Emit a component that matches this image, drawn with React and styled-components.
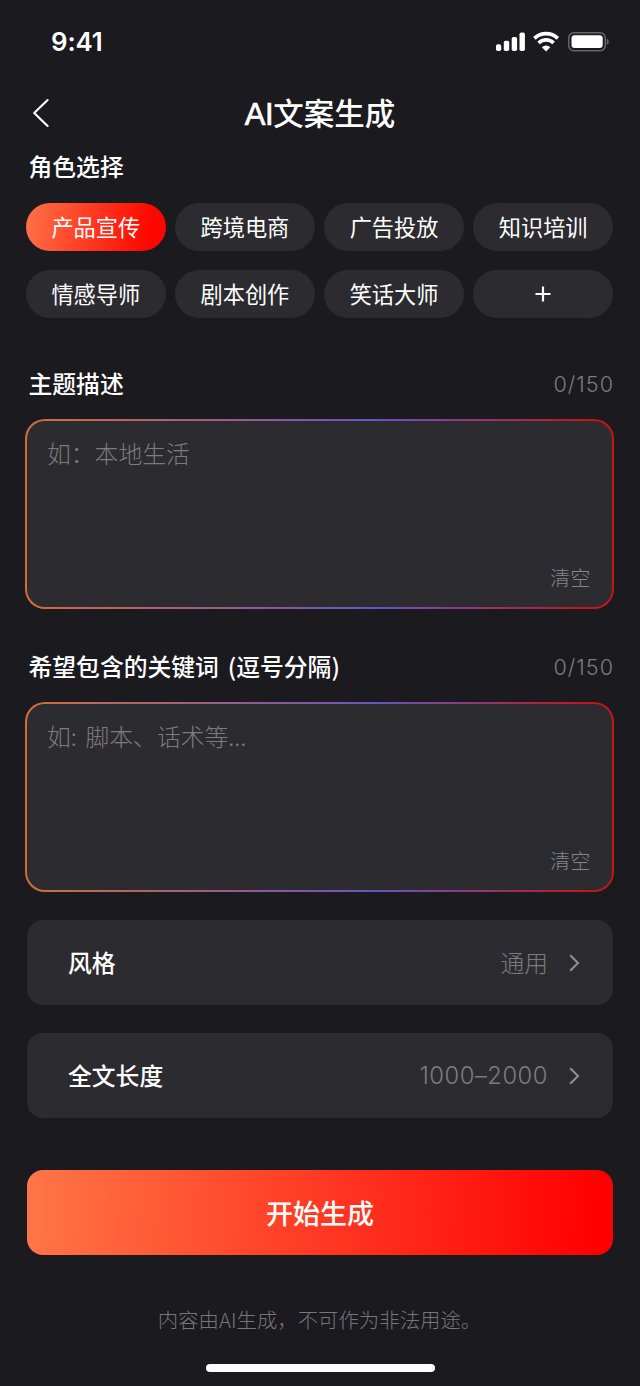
import React, { useState } from "react"
import styled, { createGlobalStyle, css } from "styled-components"

const GlobalStyle = createGlobalStyle`
  * {
    box-sizing: border-box;
  }

  body {
    margin: 0;
    background: #1b1a1f;
  }

  button {
    border: 0;
    padding: 0;
    margin: 0;
    background: none;
    color: inherit;
    font: inherit;
  }
`

const Screen = styled.main`
  width: 640px;
  height: 1386px;
  overflow: hidden;
  display: flex;
  flex-direction: column;
  background: #1b1a1f;
  color: #fff;
  font-family: "Noto Sans CJK SC", sans-serif;
`

const StatusBar = styled.div`
  height: 84px;
  padding: 0 31px 0 51px;
  display: flex;
  align-items: center;
  justify-content: space-between;
`

const Time = styled.span`
  font-family: Inter, sans-serif;
  font-size: 25.8px;
  font-weight: 600;
  line-height: 30px;
  letter-spacing: -0.1px;
`

const StatusIcons = styled.div`
  display: flex;
  align-items: center;

  svg {
    display: block;
  }
`

const Header = styled.header`
  height: 58px;
  padding: 0 32px;
  display: grid;
  grid-template-columns: 18px 1fr 18px;
  align-items: center;

  svg {
    display: block;
  }
`

const Title = styled.h1`
  margin: 0;
  text-align: center;
  font-size: 30.5px;
  font-weight: 500;
  line-height: 44px;

  span {
    font-family: "Liberation Sans", sans-serif;
    font-size: 31px;
    -webkit-text-stroke: 0.7px #fff;
    letter-spacing: -0.3px;
  }
`

const Label = styled.h2`
  margin: 0;
  padding-bottom: 2px;
  font-size: 23.8px;
  font-weight: 500;
  line-height: 34px;
  word-spacing: 3.5px;
  white-space: pre;
`

const Roles = styled.section`
  padding: 7px 27px 0 26px;

  ${Label} {
    padding-left: 2.5px;
  }
`

const RoleGrid = styled.div`
  margin-top: 18px;
  display: grid;
  grid-template-columns: repeat(4, 1fr);
  grid-auto-rows: 48px;
  gap: 19px 9.5px;
`

const Role = styled.button`
  padding-bottom: 2px;
  display: flex;
  align-items: center;
  justify-content: center;
  border-radius: 24px;
  background: #2c2b30;
  font-size: 22.2px;
  line-height: 32px;

  svg {
    margin-top: 2px;
  }

  ${({ $active }) =>
    $active &&
    css`
      background: linear-gradient(100deg, #ff7348 0%, #ff0500 88%);
    `}
`

const Field = styled.section`
  padding: 0 26px 0 25px;
  margin-top: ${({ $top }) => $top}px;
`

const FieldHead = styled.div`
  height: 36px;
  padding: 0 0 0 3.5px;
  display: flex;
  align-items: center;
  justify-content: space-between;
`

const Counter = styled.span`
  padding-bottom: 1px;
  font-family: Inter, sans-serif;
  font-size: 21.6px;
  font-weight: 300;
  letter-spacing: 1px;
  color: #7c7b7f;
`

const InputBox = styled.div`
  height: 190px;
  margin-top: 17px;
  padding: 14px 21.5px 14px 20px;
  display: flex;
  flex-direction: column;
  justify-content: space-between;
  border: 2px solid transparent;
  border-radius: 20px;
  background: linear-gradient(#2c2b30, #2c2b30) padding-box,
    linear-gradient(90deg, #d66c3c 0%, #6a52c4 60%, #c2161b 96%) border-box;
`

const Placeholder = styled.p`
  margin: 0;
  font-size: 23.8px;
  font-weight: 300;
  line-height: 36px;
  word-spacing: 3.5px;
  color: #7c7b7f;
`

const Clear = styled.button`
  align-self: flex-end;
  font-size: 20.2px;
  font-weight: 300;
  line-height: 30px;
  color: #858488;
`

const Options = styled.section`
  margin: 28px 27px 0;
  display: grid;
  grid-auto-rows: 85px;
  gap: 28px;
`

const Option = styled.div`
  padding: 0 33px 0 41px;
  display: flex;
  align-items: center;
  border-radius: 16px;
  background: #2c2b30;

  svg {
    display: block;
    margin-left: 21px;
  }
`

const OptionValue = styled.span`
  margin-left: auto;
  padding-bottom: ${({ $latin }) => ($latin ? 0 : 2)}px;
  font-family: ${({ $latin }) => ($latin ? "Inter, sans-serif" : "inherit")};
  font-size: 23.8px;
  font-weight: 300;
  line-height: 34px;
  letter-spacing: ${({ $latin }) => ($latin ? 0.5 : 0)}px;
  color: #7c7b7f;
`

const Submit = styled.button`
  flex: none;
  height: 85px;
  margin: 52px 27px 0;
  border-radius: 16px;
  background: linear-gradient(93deg, #ff7648 0%, #ff0000 97%);
  font-size: 27px;
  font-weight: 500;
  line-height: 40px;
`

const Notice = styled.p`
  margin: 49px 0 0;
  padding-right: 1px;
  text-align: center;
  font-size: 20.4px;
  font-weight: 300;
  line-height: 30px;
  color: #77767a;
`

const HomeIndicator = styled.div`
  width: 229px;
  height: 8px;
  margin: 29.5px auto 0;
  border-radius: 4px;
  background: #fff;
`

const roles = [
  "产品宣传",
  "跨境电商",
  "广告投放",
  "知识培训",
  "情感导师",
  "剧本创作",
  "笑话大师",
]

function PhoneStatus() {
  return (
    <StatusIcons>
      <svg width='114' height='22' viewBox='0 0 114 22' fill='#fff'>
        <rect x='1' y='13.2' width='5.2' height='6.8' rx='1.8' />
        <rect x='8.8' y='9.8' width='5.4' height='10.2' rx='1.8' />
        <rect x='16.7' y='5.9' width='5.4' height='14.1' rx='1.8' />
        <rect x='24.5' y='1.5' width='5.4' height='18.5' rx='1.8' />
        <g fill='none' stroke='#fff' strokeWidth='3.8'>
          <path d='M39.4 7.3a17 17 0 0 1 23.4 0' />
          <path d='M43.6 12a10.8 10.8 0 0 1 15 0' />
        </g>
        <path d='M51.1 20.4l-4.2-4.2a6 6 0 0 1 8.4 0z' />
        <rect
          x='73.7'
          y='1.7'
          width='36.6'
          height='18'
          rx='5.2'
          fill='none'
          stroke='#66656a'
          strokeWidth='1.5'
        />
        <rect x='76.5' y='4.3' width='31.2' height='12.8' rx='3' />
        <path d='M111.8 7.8c2.6 1 2.6 5 0 6z' fill='#66656a' />
      </svg>
    </StatusIcons>
  )
}

function Chevron() {
  return (
    <svg width='11' height='18' viewBox='0 0 11 18' fill='none'>
      <path d='M1.2 1.3L9 9L1.2 16.7' stroke='#929195' strokeWidth='2' />
    </svg>
  )
}

function TextField({ top, label, placeholder }) {
  return (
    <Field $top={top}>
      <FieldHead>
        <Label>{label}</Label>
        <Counter>0/150</Counter>
      </FieldHead>
      <InputBox>
        <Placeholder>{placeholder}</Placeholder>
        <Clear>清空</Clear>
      </InputBox>
    </Field>
  )
}

export default function App() {
  const [active, setActive] = useState(roles[0])

  return (
    <Screen>
      <GlobalStyle />
      <StatusBar>
        <Time>9:41</Time>
        <PhoneStatus />
      </StatusBar>

      <Header>
        <svg width='18' height='30' viewBox='0 0 18 30' fill='none'>
          <path
            d='M15.6 2L2.2 15L15.6 28'
            stroke='#fff'
            strokeWidth='2.1'
            strokeLinecap='round'
            strokeLinejoin='round'
          />
        </svg>
        <Title>
          <span>AI</span>文案生成
        </Title>
      </Header>

      <Roles>
        <Label>角色选择</Label>
        <RoleGrid>
          {roles.map((role) => (
            <Role
              key={role}
              $active={role === active}
              onClick={() => setActive(role)}
            >
              {role}
            </Role>
          ))}
          <Role>
            <svg width='16' height='16' viewBox='0 0 16 16'>
              <path d='M8 .5v15M.5 8h15' stroke='#fff' strokeWidth='2.2' />
            </svg>
          </Role>
        </RoleGrid>
      </Roles>

      <TextField top={48} label='主题描述' placeholder='如：本地生活' />
      <TextField
        top={40}
        label='希望包含的关键词 (逗号分隔)'
        placeholder='如: 脚本、话术等...'
      />

      <Options>
        <Option>
          <Label>风格</Label>
          <OptionValue>通用</OptionValue>
          <Chevron />
        </Option>
        <Option>
          <Label>全文长度</Label>
          <OptionValue $latin>1000–2000</OptionValue>
          <Chevron />
        </Option>
      </Options>

      <Submit>开始生成</Submit>
      <Notice>内容由AI生成，不可作为非法用途。</Notice>
      <HomeIndicator />
    </Screen>
  )
}
